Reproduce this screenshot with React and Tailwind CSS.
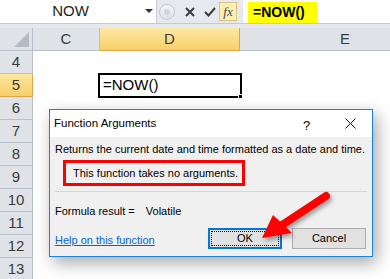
import React from 'react';

const ui = { fontFamily: '"Liberation Sans", Arial, sans-serif' };

const RowHead = ({ n, active }) => (
  <div
    className={
      'w-[33px] h-[23px] shrink-0 flex items-center justify-center text-[15px] border-r border-b ' +
      (active
        ? 'bg-gradient-to-b from-[#fce7a0] to-[#f7cf68] border-[#d8a84a] text-[#3b3b3b]'
        : 'bg-[#dfe3e8] border-[#b9bfc8] text-[#3b3b3b]')
    }
  >
    {n}
  </div>
);

const Arrow = () => (
  <svg className="absolute left-0 top-0 pointer-events-none" width="390" height="279">
    <defs>
      <filter id="sh" x="-20%" y="-20%" width="140%" height="140%">
        <feDropShadow dx="2" dy="3" stdDeviation="2" floodColor="#000" floodOpacity="0.35" />
      </filter>
    </defs>
    <g filter="url(#sh)">
      <line x1="326" y1="196" x2="282" y2="225" stroke="#ff0000" strokeWidth="8" strokeLinecap="round" />
      <polygon points="262,238 273,215 292,233" fill="#ff0000" />
    </g>
  </svg>
);

export default function App() {
  const rows = [4, 5, 6, 7, 8, 9, 10, 11, 12, 13];
  return (
    <div className="relative w-[390px] h-[279px] overflow-hidden bg-white" style={ui}>
      {/* formula bar */}
      <div className="flex h-[24px] bg-[#e6e9ed] border-b border-[#c5cad1]">
        <div className="w-[157px] h-full bg-white border-r border-[#c5cad1] relative flex items-center justify-center text-[15px] text-[#1e1e1e] pr-[15px]">
          NOW
          <span className="absolute right-[3px] top-[9px] w-0 h-0 border-l-[4px] border-r-[4px] border-t-[4px] border-l-transparent border-r-transparent border-t-[#333]" />
        </div>
        <div className="w-[86px] flex items-center">
          <div className="ml-[2px] w-[16px] h-[16px] rounded-full border border-[#c3c7cc] bg-gradient-to-b from-[#f7f8f9] to-[#dde0e4] flex items-center justify-center">
            <div className="w-[6px] h-[6px] rounded-full bg-[#cfd3d8]" />
          </div>
          <svg className="ml-[10px]" width="10" height="10" viewBox="0 0 10 10">
            <path d="M1 1 L9 9 M9 1 L1 9" stroke="#3c3c3c" strokeWidth="2" />
          </svg>
          <svg className="ml-[9px]" width="12" height="10" viewBox="0 0 12 10">
            <path d="M1 5 L4.5 8.5 L11 1" stroke="#3c3c3c" strokeWidth="2" fill="none" />
          </svg>
          <div className="ml-[3px] w-[18px] h-[19px] bg-[#fdefb2] border border-[#dcc57f] flex items-center justify-center text-[13px] italic text-[#4a4a4a]" style={{ fontFamily: '"Liberation Serif", serif' }}>
            fx
          </div>
        </div>
        <div className="flex-1 bg-white flex items-end">
          <div className="ml-[5px] h-[21px] w-[69px] bg-[#ffff00] flex items-center pl-[5px] text-[14px] font-bold text-black">
            =NOW()
          </div>
        </div>
      </div>
      <div className="h-[4px] bg-[#e6e9ed]" />
      {/* column headers */}
      <div className="flex h-[23px]">
        <div className="w-[33px] h-full bg-[#dfe3e8] border-r border-b border-[#b9bfc8] relative">
          <svg className="absolute right-[3px] bottom-[3px]" width="15" height="15" viewBox="0 0 15 15">
            <polygon points="15,0 15,15 0,15" fill="#b5bbc3" />
          </svg>
        </div>
        <div className="w-[67px] h-full bg-[#dfe3e8] border-r border-b border-[#b9bfc8] flex items-center justify-center text-[15px] text-[#3b3b3b]">C</div>
        <div className="w-[140px] h-full bg-gradient-to-b from-[#fde9a2] to-[#f8cf68] border-r border-b border-[#d8a84a] flex items-center justify-center text-[15px] text-[#3b3b3b]">D</div>
        <div className="flex-1 h-full bg-[#dfe3e8] border-b border-[#b9bfc8] flex items-center justify-center text-[15px] text-[#3b3b3b] pl-[60px]">E</div>
      </div>
      {/* rows */}
      {rows.map((n) => (
        <div key={n} className="flex h-[23px]">
          <RowHead n={n} active={n === 5} />
          <div className="flex-1 bg-white flex">
            {n === 5 && (
              <div className="ml-[65px] -mt-px w-[144px] h-[25px] border-2 border-black relative flex items-center pl-[3px] text-[15px] text-black z-10">
                =NOW()
                <span className="absolute -right-[3px] -bottom-[3px] w-[5px] h-[5px] bg-black border border-white" />
              </div>
            )}
          </div>
        </div>
      ))}
      {/* dialog */}
      <div className="absolute left-[49px] top-[109px] w-[324px] h-[148px] border border-[#1883d7] bg-[#f0f0f0] flex flex-col shadow-[4px_6px_16px_rgba(0,0,0,0.35)] z-20 text-[11px] text-black whitespace-nowrap">
        <div className="h-[27px] bg-white flex items-center pl-[4px] relative text-[11.5px]">
          <span>Function Arguments</span>
          <span className="absolute left-[253px] top-[6px] text-[13px]">?</span>
          <svg className="absolute left-[295px] top-[8px]" width="11" height="11" viewBox="0 0 11 11">
            <path d="M0.5 0.5 L10.5 10.5 M10.5 0.5 L0.5 10.5" stroke="#111" strokeWidth="1" />
          </svg>
        </div>
        <div className="flex-1 pl-[5px] pr-[6px]">
          <div className="pt-[4px] leading-[16px]">Returns the current date and time formatted as a date and time.</div>
          <div className="ml-[8px] mt-[3px] w-[182px] h-[26px] border-[3px] border-[#ff0000] flex items-center pl-[7px] leading-[16px]">
            This function takes no arguments.
          </div>
          <div className="mt-[5px] h-px w-[312px] bg-[#d6d6d6]" />
          <div className="mt-[11px] leading-[16px] flex">
            <span>Formula result =</span>
            <span className="ml-[11px]">Volatile</span>
          </div>
          <div className="mt-[9px] flex items-center h-[21px]">
            <a href="#" className="text-[#0066cc] underline mt-[3px] leading-[16px]">Help on this function</a>
            <div className="ml-auto flex gap-[10px]">
              <div className="w-[74px] h-[21px] border-2 border-[#0078d7] bg-[#e1e1e1] p-px">
                <div className="w-full h-full border border-dotted border-black flex items-center justify-center">OK</div>
              </div>
              <div className="w-[74px] h-[21px] border border-[#adadad] bg-[#e1e1e1] flex items-center justify-center">Cancel</div>
            </div>
          </div>
        </div>
      </div>
      <div className="absolute inset-0 z-30 pointer-events-none">
        <Arrow />
      </div>
    </div>
  );
}
